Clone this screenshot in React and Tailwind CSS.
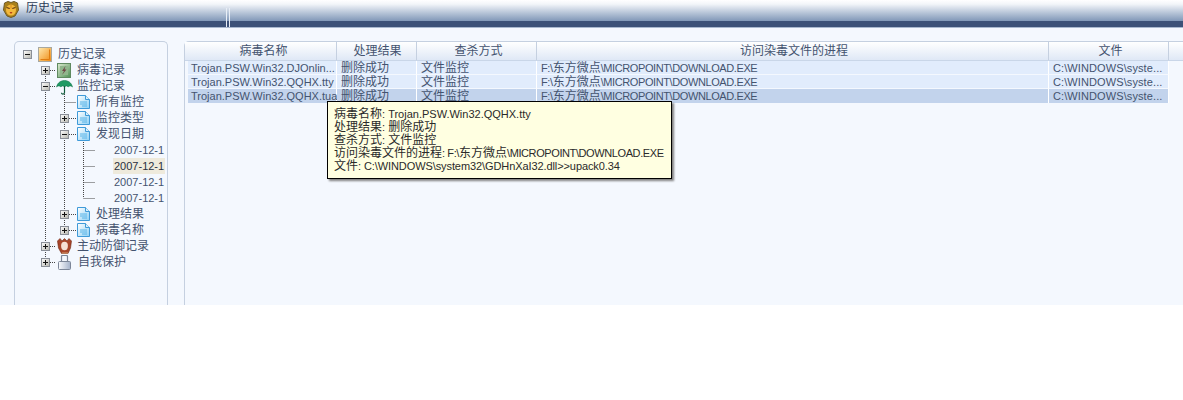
import React from "react";

const CJK = { fontFamily: '"Liberation Sans","Noto Sans CJK SC",sans-serif' };

function T({ text, track }) {
  const parts = text.split(/([\u4e00-\u9fff]+)/).filter(Boolean);
  return (
    <>
      {parts.map((p, i) =>
        /[\u4e00-\u9fff]/.test(p) ? (
          <span key={i} className="text-[12px]">{p}</span>
        ) : (
          <span key={i} className={track || ""}>{p}</span>
        )
      )}
    </>
  );
}

function Box({ open }) {
  return (
    <svg width="9" height="9" viewBox="0 0 9 9" className="shrink-0 block">
      <defs>
        <linearGradient id="bx" x1="0" y1="0" x2="1" y2="1">
          <stop offset="0" stopColor="#ffffff" />
          <stop offset="1" stopColor="#b4b4ac" />
        </linearGradient>
      </defs>
      <rect x="0.5" y="0.5" width="8" height="8" fill="url(#bx)" stroke="#8a8f98" />
      <path d="M2 4.5h5" stroke="#111" />
      {!open && <path d="M4.5 2v5" stroke="#111" />}
    </svg>
  );
}

function Lion() {
  return (
    <svg width="16" height="17" viewBox="0 0 16 17" className="block">
      <path d="M1.5 2 L5 0.5 L8 1.5 L11 0.5 L14.5 2 L15.5 9 L12 15 L8 16.5 L4 15 L0.5 9Z" fill="#a87f1a" stroke="#6f5a26" />
      <ellipse cx="8" cy="9" rx="5" ry="5.6" fill="#f4b93c" />
      <path d="M3.5 6.5l3.2 1M12.5 6.5l-3.2 1" stroke="#5a3410" strokeWidth="1.3" />
      <path d="M6.5 11h3L8 13Z" fill="#b4401a" />
      <path d="M8 3.5v4" stroke="#d98c1e" />
    </svg>
  );
}

function OrangeSq() {
  return (
    <svg width="14" height="15" viewBox="0 0 14 15" className="block">
      <defs>
        <linearGradient id="os" x1="0" y1="0" x2="1" y2="1">
          <stop offset="0" stopColor="#ffeab0" />
          <stop offset="1" stopColor="#f08a10" />
        </linearGradient>
      </defs>
      <rect x="0.5" y="0.5" width="13" height="14" fill="url(#os)" stroke="#a8a8a0" />
      <path d="M11.5 2.5V12.5H2.5" fill="none" stroke="#e07c10" />
    </svg>
  );
}

function GreenBook() {
  return (
    <svg width="14" height="15" viewBox="0 0 14 15" className="block">
      <defs>
        <linearGradient id="gb" x1="0" y1="0" x2="1" y2="1">
          <stop offset="0" stopColor="#dcebd0" />
          <stop offset="1" stopColor="#4f8f55" />
        </linearGradient>
      </defs>
      <rect x="0.5" y="0.5" width="13" height="14" fill="url(#gb)" stroke="#5f8a60" />
      <rect x="3" y="3" width="8" height="9" fill="#8fb58c" />
      <path d="M8.5 3 L5 8 H7 L5 12 L9.5 6.5 H7.5Z" fill="#6e4646" />
    </svg>
  );
}

function Umbrella() {
  return (
    <svg width="17" height="15" viewBox="0 0 17 15" className="block">
      <path d="M0.5 7 C1.5 2.5 5 0.5 8.5 0.5 C12 0.5 15.5 2.5 16.5 7 C15 5.5 13.5 5.5 12 7 C11 5.5 10 5.5 8.5 7 C7 5.5 6 5.5 5 7 C3.5 5.5 2 5.5 0.5 7Z" fill="#1f9a63" stroke="#127048" strokeWidth="0.5" />
      <path d="M8.5 6v6.5c0 2-3 2-3 0.3" stroke="#0f5a3a" strokeWidth="1.2" fill="none" />
    </svg>
  );
}

function Doc() {
  return (
    <svg width="13" height="14" viewBox="0 0 13 14" className="block">
      <defs>
        <linearGradient id="dc" x1="0" y1="0" x2="1" y2="1">
          <stop offset="0" stopColor="#ffffff" />
          <stop offset="1" stopColor="#8ed0f4" />
        </linearGradient>
      </defs>
      <path d="M0.5 0.5H8.5L12.5 4.5V13.5H0.5Z" fill="url(#dc)" stroke="#3f9ad8" />
      <path d="M8.5 0.5V4.5H12.5" fill="#d8f0fc" stroke="#3f9ad8" />
      <path d="M3 7h7M3 9h7M5 11h5" stroke="#58b4e8" />
    </svg>
  );
}

function Glove() {
  return (
    <svg width="15" height="16" viewBox="0 0 15 16" className="block">
      <path d="M0.5 3 L3 0.5 L5 3 L7.5 0.5 L10 3 L12 0.5 L14.5 3 L13.5 10 L11 15.5 H4.5 L1.5 10Z" fill="#a8452a" stroke="#6e2a14" strokeWidth="0.6" />
      <ellipse cx="7.5" cy="8" rx="3.4" ry="4.2" fill="#f6e0d4" />
      <path d="M5 15h6" stroke="#d9a070" />
    </svg>
  );
}

function Lock() {
  return (
    <svg width="13" height="15" viewBox="0 0 13 15" className="block">
      <defs>
        <linearGradient id="lk" x1="0" y1="0" x2="1" y2="0">
          <stop offset="0" stopColor="#fafbfd" />
          <stop offset="1" stopColor="#a4b2ca" />
        </linearGradient>
      </defs>
      <path d="M3.5 7V1.5Q3.5 0.5 4.5 0.5H8.5Q9.5 0.5 9.5 1.5V7" fill="none" stroke="#7c8698" strokeWidth="1.2" />
      <rect x="0.5" y="6.5" width="12" height="8" rx="1" fill="url(#lk)" stroke="#7c8698" />
    </svg>
  );
}

const tree = [
  { box: "open", boxX: 9, iconX: 24, iconY: 1, icon: <OrangeSq />, textX: 44, label: "历史记录" },
  { box: "plus", boxX: 27, iconX: 43, iconY: 1, icon: <GreenBook />, textX: 63, label: "病毒记录" },
  { box: "open", boxX: 27, iconX: 42, iconY: 2, icon: <Umbrella />, textX: 63, label: "监控记录" },
  { iconX: 63, iconY: 1, icon: <Doc />, textX: 82, label: "所有监控" },
  { box: "plus", boxX: 46, iconX: 63, iconY: 1, icon: <Doc />, textX: 82, label: "监控类型" },
  { box: "open", boxX: 46, iconX: 63, iconY: 1, icon: <Doc />, textX: 82, label: "发现日期" },
  { textX: 100, label: "2007-12-1", date: true },
  { textX: 100, label: "2007-12-1", date: true, selected: true },
  { textX: 100, label: "2007-12-1", date: true },
  { textX: 100, label: "2007-12-1", date: true },
  { box: "plus", boxX: 46, iconX: 63, iconY: 1, icon: <Doc />, textX: 82, label: "处理结果" },
  { box: "plus", boxX: 46, iconX: 63, iconY: 1, icon: <Doc />, textX: 82, label: "病毒名称" },
  { box: "plus", boxX: 27, iconX: 43, iconY: 0, icon: <Glove />, textX: 63, label: "主动防御记录" },
  { box: "plus", boxX: 27, iconX: 44, iconY: 1, icon: <Lock />, textX: 64, label: "自我保护" },
];

function TreeRow({ r }) {
  return (
    <div className="h-4 relative">
      {r.box && (
        <span className="absolute top-[4px]" style={{ left: r.boxX }}>
          <Box open={r.box === "open"} />
        </span>
      )}
      {r.icon && (
        <span className="absolute" style={{ left: r.iconX, top: r.iconY }}>
          {r.icon}
        </span>
      )}
      <span
        className={
          "absolute top-0 h-4 leading-[16px] whitespace-nowrap " +
          (r.date ? "text-[11px] " : "text-[12px] ") +
          (r.selected ? "bg-[#eeeadc] text-[#2a3040] px-px -ml-px" : "text-[#44536f]")
        }
        style={{ left: r.textX }}
      >
        {r.label}
      </span>
    </div>
  );
}

function Guides() {
  return (
    <svg className="absolute left-0 top-0 pointer-events-none" width="153" height="240">
      <g stroke="#444" strokeDasharray="1 1" fill="none">
        <path d="M31.5 30V212" />
        <path d="M36 24.5h6M36 40.5h6M36 200.5h6M36 216.5h6" />
        <path d="M50.5 46V184" />
        <path d="M50.5 56.5h12M55 72.5h8M55 88.5h8M55 168.5h8M55 184.5h8" />
        <path d="M69.5 94V152" />
        <path d="M69.5 104.5h11M69.5 120.5h11M69.5 136.5h11M69.5 152.5h11" />
      </g>
    </svg>
  );
}

const headers = [
  ["病毒名称", "w-[152px] pl-[6px]"],
  ["处理结果", "w-[80px] pl-[2px]"],
  ["查杀方式", "w-[120px] pl-[4px]"],
  ["访问染毒文件的进程", "w-[512px] pl-[3px]"],
  ["文件", "w-[120px] pl-[4px]"],
];
const cellW = ["w-[149px] pl-[3px]", "w-[80px] pl-[4px]", "w-[120px] pl-[4px]", "w-[512px] pl-[4px]", "w-[120px] pl-[4px]"];
const tracks = ["", "", "", "tracking-[-0.4px]", "tracking-[0.1px]"];
const rows = [
  ["Trojan.PSW.Win32.DJOnlin...", false],
  ["Trojan.PSW.Win32.QQHX.tty", false],
  ["Trojan.PSW.Win32.QQHX.tua", true],
];

export default function App() {
  return (
    <div className="w-[1183px] h-[400px] bg-white overflow-hidden relative" style={CJK}>
      {/* title bar */}
      <div className="h-[28px] flex flex-col">
        <div className="h-[21px] bg-gradient-to-b from-white via-[#f2f5f9] via-20% to-[#8198b8] flex items-start relative">
          <span className="ml-[3px] mt-px"><Lion /></span>
          <span className="ml-[7px] text-[12px] leading-[16px] text-[#2c3c58]">历史记录</span>
          <span className="absolute left-[226px] top-[8px] bottom-0 w-[4px] border-x border-[#e8eef6]" />
        </div>
        <div className="h-[6px] bg-[#3c5178] relative">
          <span className="absolute left-[226px] top-0 bottom-0 w-[4px] border-x border-[#e8eef6]" />
        </div>
        <div className="h-px bg-[#a9b8cf]" />
      </div>

      {/* body */}
      <div className="h-[277px] bg-[#f4f8fe] flex pt-[13px] pl-[14px] gap-[16px]">
        {/* tree */}
        <div className="w-[154px] h-[264px] border-x border-t border-[#c5d0e0] rounded-t-[5px] pt-[4px]">
          <div className="relative -ml-px">
            <Guides />
            {tree.map((r, i) => (
              <TreeRow key={i} r={r} />
            ))}
          </div>
        </div>

        {/* table */}
        <div className="flex-1 h-[264px] border-l border-t border-[#c5d0e0] rounded-tl-[5px] text-[#44536f]">
          <div className="flex h-[19px] border-b border-[#c9d6e8] bg-gradient-to-b from-[#ffffff] to-[#dfe8f6]">
            {headers.map(([h, w], i) => (
              <div key={i} className={"border-r border-[#c5d0e0] h-[18px] text-center text-[12px] leading-[19px] text-[#44536f] " + w}>
                {h}
              </div>
            ))}
          </div>
          {rows.map(([name, sel], i) => (
            <div key={i} className="flex pl-[3px] h-[14px]">
              {[name, "删除成功", "文件监控", "F:\\东方微点\\MICROPOINT\\DOWNLOAD.EXE", "C:\\WINDOWS\\syste..."].map((c, j) => (
                <div
                  key={j}
                  className={
                    "h-[14px] border-r border-white whitespace-nowrap text-[11px] leading-[14px] " +
                    cellW[j] + " " +
                    (sel ? "bg-[#c2d3ec]" : "bg-[#e1ecfc] border-b border-b-[#f4f8fe]")
                  }
                >
                  <T text={c} track={tracks[j]} />
                </div>
              ))}
            </div>
          ))}
        </div>
      </div>

      {/* tooltip */}
      <div className="absolute left-[327px] top-[101px] w-[345px] h-[78px] border border-black bg-[#ffffe1] pl-[6px] pt-[6px] text-[11px] leading-[13px] text-[#2a2a2a] shadow-[2px_2px_2px_#808080] whitespace-nowrap">
        <div className="h-[13px]"><T text="病毒名称: Trojan.PSW.Win32.QQHX.tty" /></div>
        <div className="h-[13px]"><T text="处理结果: 删除成功" /></div>
        <div className="h-[13px]"><T text="查杀方式: 文件监控" /></div>
        <div className="h-[13px]"><T text="访问染毒文件的进程: F:\东方微点\MICROPOINT\DOWNLOAD.EXE" track="tracking-[-0.4px]" /></div>
        <div className="h-[13px]"><T text="文件: C:\WINDOWS\system32\GDHnXaI32.dll>>upack0.34" track="tracking-[-0.09px]" /></div>
      </div>
    </div>
  );
}
